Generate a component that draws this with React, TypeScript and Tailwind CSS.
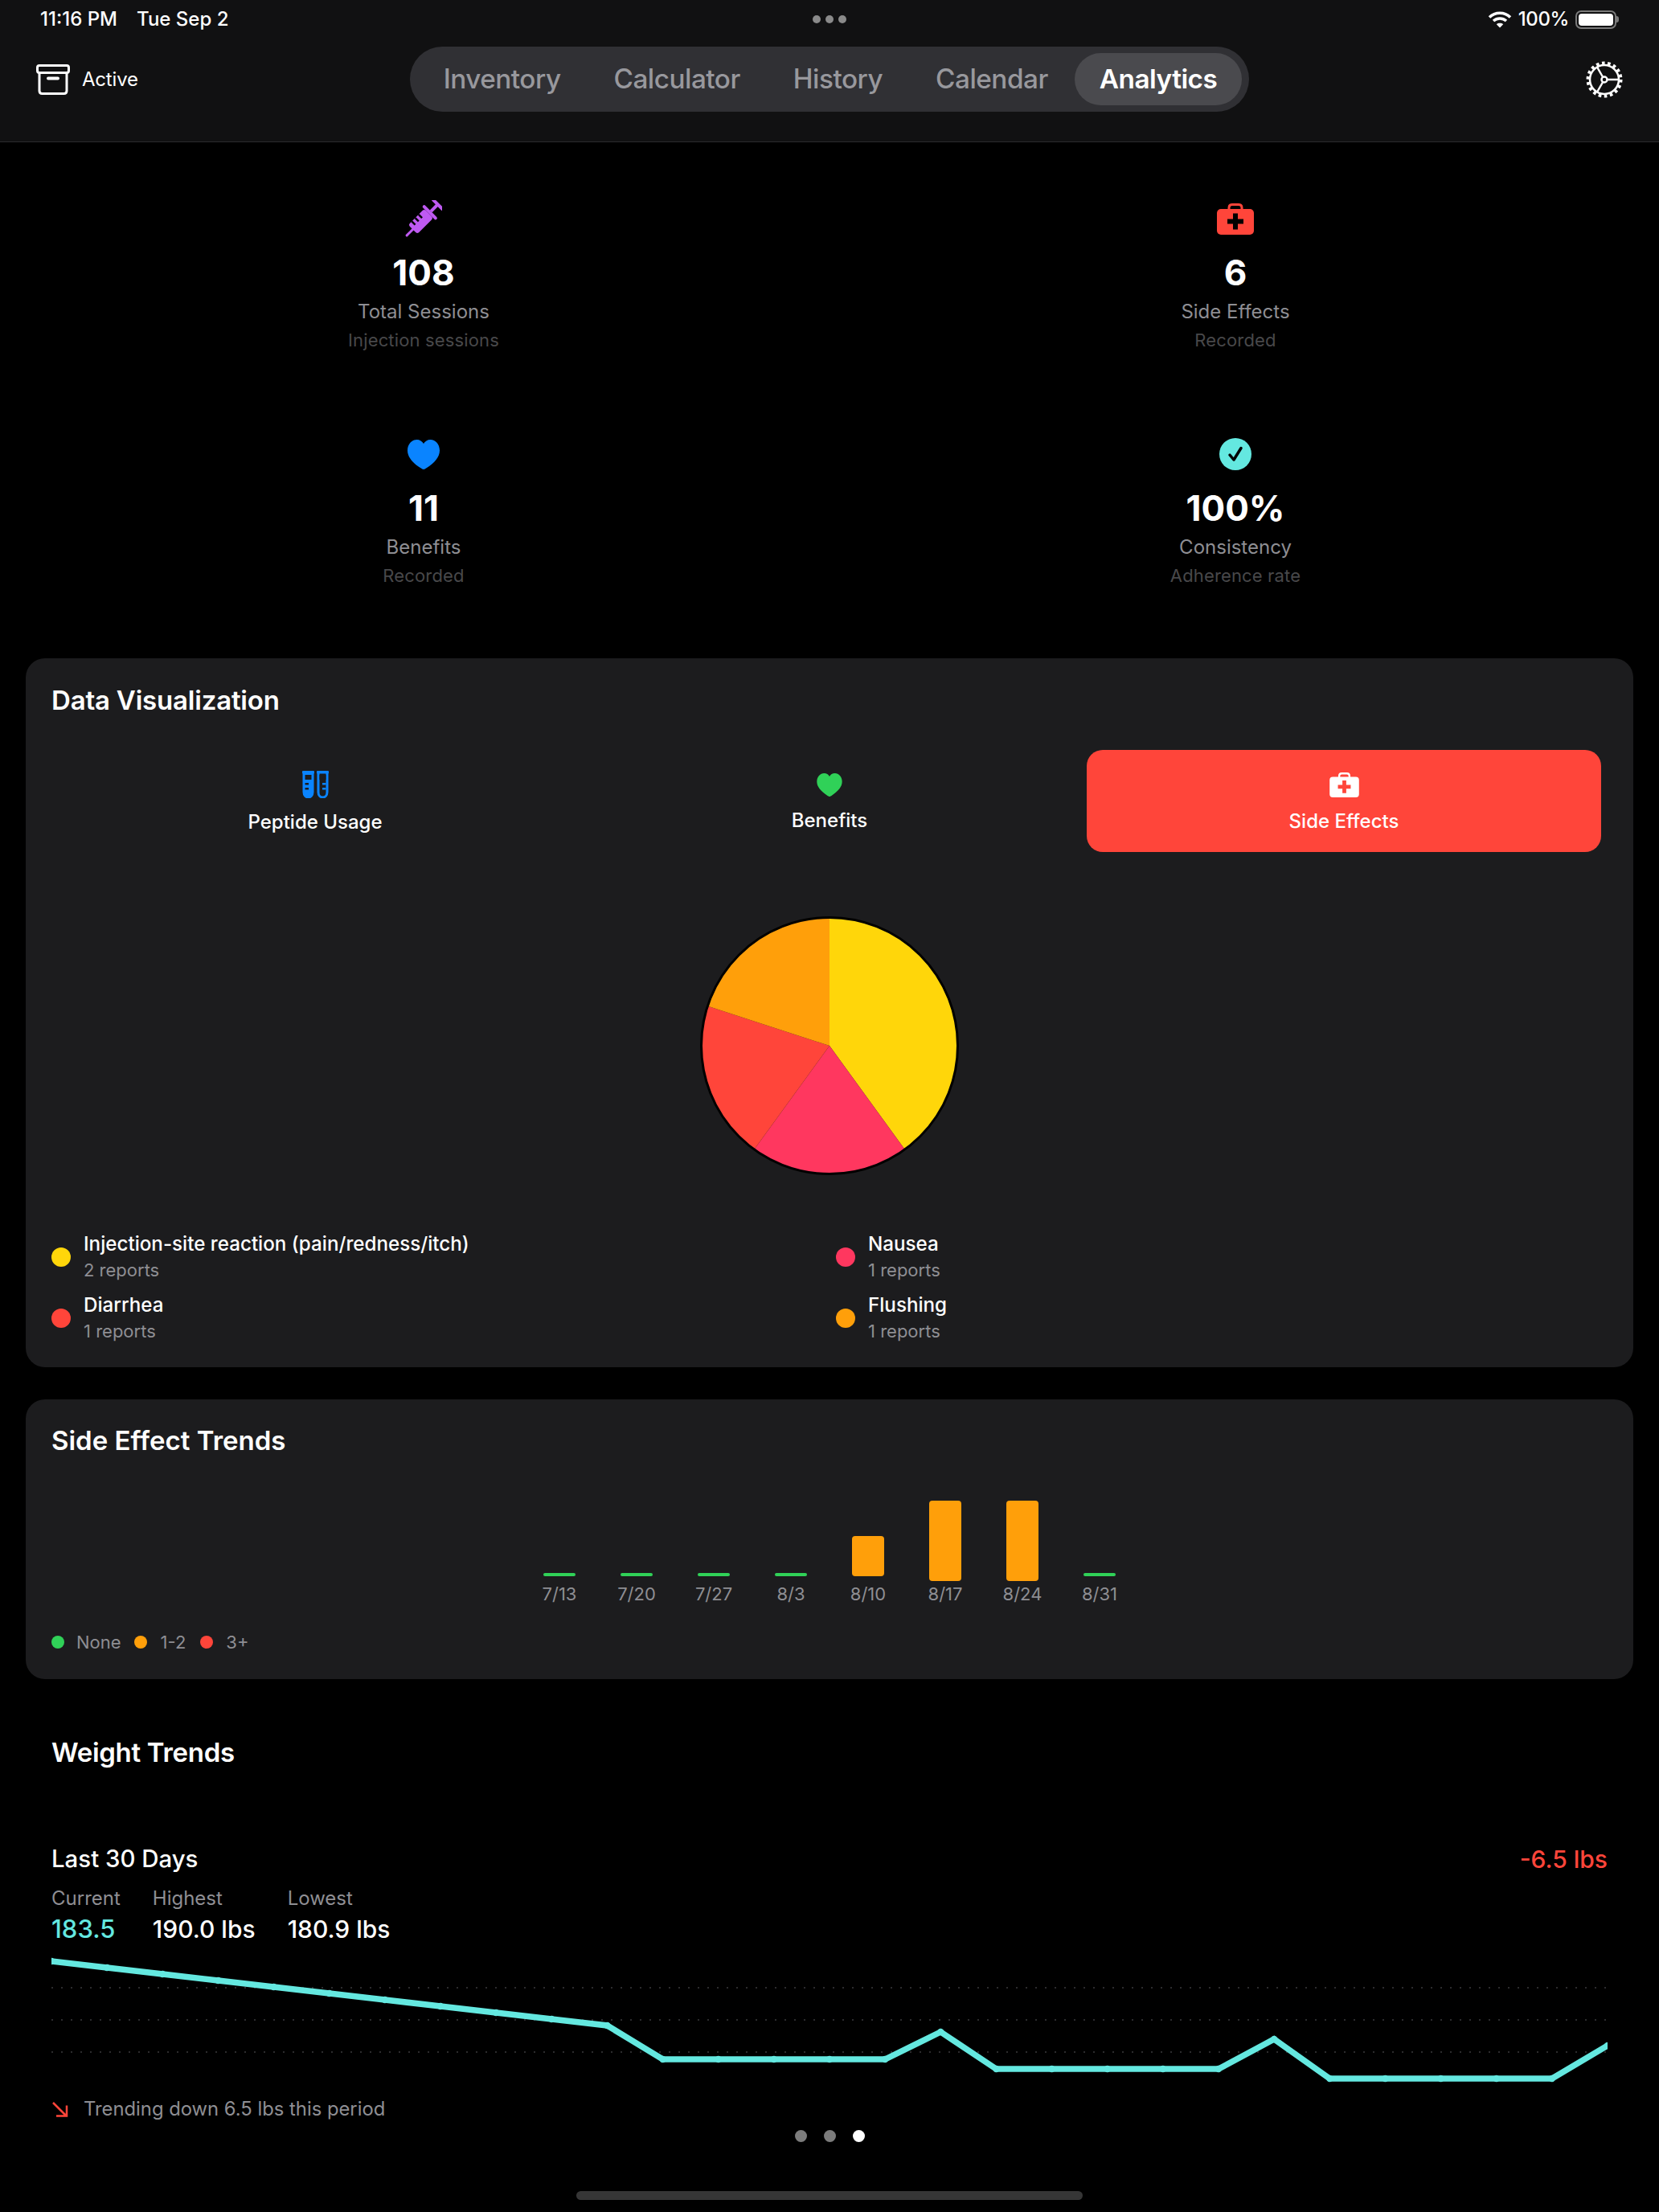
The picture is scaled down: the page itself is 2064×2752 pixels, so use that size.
const tabs = ["Inventory", "Calculator", "History", "Calendar", "Analytics"];

const stats = [
  { icon: "syringe", value: "108", label: "Total Sessions", sub: "Injection sessions" },
  { icon: "kit", value: "6", label: "Side Effects", sub: "Recorded" },
  { icon: "heart", value: "11", label: "Benefits", sub: "Recorded" },
  { icon: "check", value: "100%", label: "Consistency", sub: "Adherence rate" },
];

const legend = [
  { name: "Injection-site reaction (pain/redness/itch)", sub: "2 reports", color: "bg-[#ffd60a]" },
  { name: "Nausea", sub: "1 reports", color: "bg-[#ff375f]" },
  { name: "Diarrhea", sub: "1 reports", color: "bg-[#ff453a]" },
  { name: "Flushing", sub: "1 reports", color: "bg-[#ff9f0a]" },
];

const bars = [
  { label: "7/13", kind: "none" },
  { label: "7/20", kind: "none" },
  { label: "7/27", kind: "none" },
  { label: "8/3", kind: "none" },
  { label: "8/10", kind: "mid" },
  { label: "8/17", kind: "high" },
  { label: "8/24", kind: "high" },
  { label: "8/31", kind: "none" },
];

const weightY = [
  10, 18, 26, 34, 42, 50, 58, 66, 74, 82, 90, 132, 132, 132, 132, 132, 98, 144, 144, 144, 144, 144, 107, 156, 156,
  156, 156, 156, 115,
];
const weightPoints = weightY.map((y, i) => `${(i * 1936) / 28},${y}`).join(" ");

function HeartIcon({ className }: { className: string }) {
  return (
    <svg viewBox="0 0 40 37" className={className} fill="currentColor">
      <path d="M20 37C19 37 17.8 36.3 16 35.1 6.5 28.8 0 21.600 0 13.500 0 5.700 5.300 0 11.500 0 15.300 0 18.200 2 20 5.100 21.800 2 24.700 0 28.500 0 34.700 0 40 5.700 40 13.500 40 21.600 33.500 28.800 24 35.100 22.200 36.300 21 37 20 37Z" />
    </svg>
  );
}

function KitIcon({ className, cross }: { className: string; cross: string }) {
  return (
    <svg viewBox="0 0 46 39" className={className}>
      <path d="M15 9V5.500C15 3 16.500 1.500 19 1.500H27C29.500 1.500 31 3 31 5.500V9" fill="none" stroke="currentColor" strokeWidth="3" />
      <rect x="0" y="7" width="46" height="32" rx="5" fill="currentColor" />
      <path d="M20 12.500H26V19.500H33V25.500H26V32.500H20V25.500H13V19.500H20Z" fill={cross} />
    </svg>
  );
}

function SyringeIcon({ className }: { className: string }) {
  return (
    <svg viewBox="0 0 46 46" className={className} fill="currentColor">
      <g transform="rotate(-45 23 23)">
        <rect x="-8" y="21.500" width="16" height="3" rx="1.500" />
        <rect x="4" y="15" width="28" height="16" rx="3" />
        <rect x="9" y="15" width="2.500" height="6" fill="#000" />
        <rect x="15" y="15" width="2.500" height="6" fill="#000" />
        <rect x="21" y="15" width="2.500" height="6" fill="#000" />
        <rect x="32" y="11" width="4" height="24" rx="2" />
        <rect x="36" y="21" width="11" height="4" />
        <rect x="46" y="13" width="4" height="20" rx="2" />
      </g>
    </svg>
  );
}

function CheckIcon({ className }: { className: string }) {
  return (
    <svg viewBox="0 0 40 40" className={className}>
      <circle cx="20" cy="20" r="20" fill="currentColor" />
      <path d="M13 21L18 27L27 12.500" fill="none" stroke="#000" strokeWidth="3.500" strokeLinecap="round" strokeLinejoin="round" />
    </svg>
  );
}

function TubesIcon({ className }: { className: string }) {
  return (
    <svg viewBox="0 0 33 34" className={className} fill="none">
      {[0, 18].map((x) => (
        <g key={x} transform={`translate(${x} 0)`}>
          <rect x="0" y="0" width="15" height="3.500" rx="1" fill="currentColor" />
          <path d="M2 3V26.500C2 30.500 4.500 33 7.500 33S13 30.500 13 26.500V3" stroke="currentColor" strokeWidth="3" fill={x === 0 ? "currentColor" : "none"} />
          <rect x="3.500" y="5" width="8" height="6" fill="#1c1c1e" />
          <rect x={x === 0 ? 3.500 : 7} y="15" width="4.500" height="2.500" fill={x === 0 ? "#1c1c1e" : "currentColor"} />
          <rect x={x === 0 ? 3.500 : 7} y="21" width="4.500" height="2.500" fill={x === 0 ? "#1c1c1e" : "currentColor"} />
        </g>
      ))}
    </svg>
  );
}

function GearIcon({ className }: { className: string }) {
  return (
    <svg viewBox="0 0 46 46" className={className} fill="none" stroke="currentColor">
      <circle cx="23" cy="23" r="18" strokeWidth="2.500" />
      <circle cx="23" cy="23" r="20.500" strokeWidth="4" strokeDasharray="3.600 3.550" />
      <circle cx="23" cy="23" r="3.500" strokeWidth="2.500" />
      <path d="M26.500 23H41M21.200 20L14 7.500M21.200 26L14 38.500" strokeWidth="2.500" />
    </svg>
  );
}

function ArchiveIcon({ className }: { className: string }) {
  return (
    <svg viewBox="0 0 42 38" className={className} fill="none" stroke="currentColor" strokeWidth="3">
      <rect x="1.500" y="1.500" width="39" height="9" rx="2.500" />
      <path d="M4 10.500V33C4 35.200 5.300 36.500 7.500 36.500H34.500C36.700 36.500 38 35.200 38 33V10.500" />
      <path d="M15 17.500H27" strokeWidth="4" strokeLinecap="round" />
    </svg>
  );
}

function StatIcon({ name }: { name: string }) {
  if (name === "syringe") return <SyringeIcon className="h-[46px] w-[46px] text-[#bf5af2]" />;
  if (name === "kit") return <KitIcon className="h-[39px] w-[46px] text-[#ff453a]" cross="#000" />;
  if (name === "heart") return <HeartIcon className="h-[37px] w-[40px] text-[#0a84ff]" />;
  return <CheckIcon className="h-[40px] w-[40px] text-[#64e8e0]" />;
}

function StatusBar() {
  return (
    <div className="grid h-[48px] grid-cols-[1fr_auto_1fr] items-center pl-[50px] pr-[50px] text-[24px] leading-none text-white">
      <div className="flex gap-[24px] font-medium">
        <span>11:16 PM</span>
        <span>Tue Sep 2</span>
      </div>
      <div className="flex gap-[6px]">
        <span className="h-[10px] w-[10px] rounded-full bg-[#8a8a8a]" />
        <span className="h-[10px] w-[10px] rounded-full bg-[#8a8a8a]" />
        <span className="h-[10px] w-[10px] rounded-full bg-[#8a8a8a]" />
      </div>
      <div className="flex items-center justify-end gap-[8px] font-medium tracking-[-0.4px]">
        <svg viewBox="0 0 30 22" className="h-[22px] w-[30px]" fill="none" stroke="currentColor" strokeWidth="3.500">
          <path d="M2 8.500C9 1.500 21 1.500 28 8.500" />
          <path d="M7 13C11.500 9 18.500 9 23 13" />
          <path d="M15 21.500L10.800 17.200C13 15.400 17 15.400 19.200 17.200Z" fill="currentColor" stroke="none" />
        </svg>
        <span>100%</span>
        <div className="flex items-center">
          <div className="h-[23px] w-[51px] rounded-[7px] border-2 border-[#7a7a7a] p-[2px]">
            <div className="h-full w-full rounded-[4px] bg-white" />
          </div>
          <div className="h-[8px] w-[3px] rounded-r-full bg-[#7a7a7a]" />
        </div>
      </div>
    </div>
  );
}

function Header() {
  return (
    <div className="h-[177px] shrink-0 border-b border-[#2b2b2d] bg-[#111112]">
      <StatusBar />
      <div className="mt-[10px] grid h-[81px] grid-cols-[1fr_auto_1fr] items-center px-[45px]">
        <div className="flex items-center gap-[15px] text-white">
          <ArchiveIcon className="h-[38px] w-[42px]" />
          <span className="text-[24px] leading-none tracking-[-0.2px]">Active</span>
        </div>
        <div className="flex h-[81px] items-center rounded-full bg-[#303034] px-[9px]">
          {tabs.map((t) => (
            <div
              key={t}
              className={
                t === "Analytics"
                  ? "flex h-[65px] items-center rounded-full bg-[#4a4a4e] px-[31px] text-[33.300px] font-semibold tracking-[-0.5px] text-white"
                  : "flex h-[65px] items-center px-[33px] text-[33.300px] font-medium tracking-[-0.5px] text-[#98989d]"
              }
            >
              {t}
            </div>
          ))}
        </div>
        <div className="flex justify-end text-white">
          <GearIcon className="h-[46px] w-[46px]" />
        </div>
      </div>
    </div>
  );
}

function Stats() {
  return (
    <div className="grid grid-cols-2 gap-x-[20px] gap-y-[105px] px-[32px] pt-[72px]">
      {stats.map((s) => (
        <div key={s.label} className="flex flex-col items-center">
          <div className="flex h-[46px] items-center justify-center">
            <StatIcon name={s.icon} />
          </div>
          <div className="mt-[20px] text-[44px] font-bold leading-[48px] text-white">{s.value}</div>
          <div className="mt-[10px] text-[24px] leading-[30px] text-[#8e8e93]">{s.label}</div>
          <div className="mt-[6px] text-[22px] leading-[28px] tracking-[0.15px] text-[#48484a]">{s.sub}</div>
        </div>
      ))}
    </div>
  );
}

function DataCard() {
  return (
    <div className="mx-[32px] mt-[89px] h-[882px] rounded-[24px] bg-[#1c1c1e] px-[32px] pt-[32px]">
      <div className="text-[33px] font-semibold leading-[40px] tracking-[-0.2px] text-white">Data Visualization</div>
      <div className="mt-[42px] grid grid-cols-3 px-[8px]">
        <div className="flex h-[127px] flex-col items-center pt-[26px]">
          <TubesIcon className="h-[34px] w-[33px] text-[#0a84ff]" />
          <span className="mt-[14px] text-[24px] font-medium leading-[32px] text-white">Peptide Usage</span>
        </div>
        <div className="flex h-[127px] flex-col items-center pt-[29px]">
          <HeartIcon className="h-[29px] w-[32px] text-[#30d158]" />
          <span className="mt-[14px] text-[24px] font-medium leading-[32px] text-white">Benefits</span>
        </div>
        <div className="flex h-[127px] flex-col items-center rounded-[20px] bg-[#ff453a] pt-[28px]">
          <KitIcon className="h-[31px] w-[37px] text-white" cross="#ff453a" />
          <span className="mt-[14px] text-[24px] font-medium leading-[32px] text-white">Side Effects</span>
        </div>
      </div>
      <div className="mt-[81px] flex justify-center">
        <svg viewBox="0 0 320 320" className="h-[320px] w-[320px] overflow-visible">
          <path d="M160 160V1A159 159 0 0 1 253.460 288.630Z" fill="#ffd60a" />
          <path d="M160 160L253.460 288.630A159 159 0 0 1 66.540 288.630Z" fill="#ff375f" />
          <path d="M160 160L66.540 288.630A159 159 0 0 1 8.780 110.870Z" fill="#ff453a" />
          <path d="M160 160L8.780 110.870A159 159 0 0 1 160 1Z" fill="#ff9f0a" />
          <circle cx="160" cy="160" r="159.500" fill="none" stroke="#000" strokeWidth="3" />
        </svg>
      </div>
      <div className="mt-[71px] grid grid-cols-[976px_1fr] gap-y-[13px]">
        {legend.map((l) => (
          <div key={l.name} className="flex items-center gap-[16px]">
            <span className={`h-[24px] w-[24px] rounded-full ${l.color}`} />
            <div>
              <div className="text-[24.200px] font-medium leading-[32px] text-white">{l.name}</div>
              <div className="mt-px text-[22px] leading-[30px] text-[#8e8e93]">{l.sub}</div>
            </div>
          </div>
        ))}
      </div>
    </div>
  );
}

function TrendsCard() {
  return (
    <div className="mx-[32px] mt-[40px] h-[348px] rounded-[24px] bg-[#1c1c1e] px-[32px] pt-[31px]">
      <div className="text-[33px] font-semibold leading-[40px] text-white">Side Effect Trends</div>
      <div className="mt-[55px] flex justify-center">
        {bars.map((b) => (
          <div key={b.label} className="flex w-[96px] flex-col items-center">
            <div className="flex h-[100px] items-end">
              {b.kind === "none" && <div className="mb-[6px] h-[4px] w-[40px] rounded-[2px] bg-[#30d158]" />}
              {b.kind === "mid" && <div className="mb-[6px] h-[50px] w-[40px] rounded-[4px] bg-[#ff9f0a]" />}
              {b.kind === "high" && <div className="h-[100px] w-[40px] rounded-[4px] bg-[#ff9f0a]" />}
            </div>
            <div className="mt-[2px] text-[22px] leading-[28px] text-[#8e8e93]">{b.label}</div>
          </div>
        ))}
      </div>
      <div className="mt-[32px] flex items-center text-[22px] leading-[28px] text-[#8e8e93]">
        <span className="h-[16px] w-[16px] rounded-full bg-[#30d158]" />
        <span className="ml-[15px]">None</span>
        <span className="ml-[16px] h-[16px] w-[16px] rounded-full bg-[#ff9f0a]" />
        <span className="ml-[17px]">1-2</span>
        <span className="ml-[18px] h-[16px] w-[16px] rounded-full bg-[#ff453a]" />
        <span className="ml-[16px]">3+</span>
      </div>
    </div>
  );
}

function WeightSection() {
  return (
    <div className="px-[64px]">
      <div className="mt-[69px] text-[33px] font-semibold leading-[44px] tracking-[-0.3px] text-white">Weight Trends</div>
      <div className="mt-[91px] flex items-center justify-between font-medium leading-[40px]">
        <span className="text-[29.400px] text-white">Last 30 Days</span>
        <span className="text-[30px] text-[#ff453a]">-6.5 lbs</span>
      </div>
      <div className="mt-[14px] flex gap-[40px]">
        <div>
          <div className="text-[24px] leading-[30px] text-[#8e8e93]">Current</div>
          <div className="mt-[4px] text-[31px] font-medium leading-[38px] text-[#64e8e0]">183.5</div>
        </div>
        <div>
          <div className="text-[24px] leading-[30px] text-[#8e8e93]">Highest</div>
          <div className="mt-[4px] text-[30px] font-medium leading-[38px] text-white">190.0 lbs</div>
        </div>
        <div>
          <div className="text-[24px] leading-[30px] text-[#8e8e93]">Lowest</div>
          <div className="mt-[4px] text-[30px] font-medium leading-[38px] text-white">180.9 lbs</div>
        </div>
      </div>
      <svg viewBox="0 0 1936 170" className="mt-[11px] h-[170px] w-[1936px]">
        {[43, 83, 123].map((y) => (
          <line key={y} x1="0" x2="1936" y1={y} y2={y} stroke="#2c2c2e" strokeWidth="2" strokeDasharray="2 10" />
        ))}
        <polyline points={weightPoints} fill="none" stroke="#64e8e0" strokeWidth="7.500" strokeLinejoin="miter" />
        {weightY.map((y, i) => (
          <circle key={i} cx={(i * 1936) / 28} cy={y} r="4.200" fill="#64e8e0" />
        ))}
      </svg>
      <div className="mt-[9px] flex items-center gap-[19px] text-[23.800px] leading-[30px] text-[#8e8e93]">
        <svg viewBox="0 0 21 19" className="h-[19px] w-[21px]" fill="none" stroke="#ff453a" strokeWidth="2.500">
          <path d="M2 1L18 17M19 4.500V17.500H6" />
        </svg>
        <span>Trending down 6.5 lbs this period</span>
      </div>
      <div className="mt-[11px] flex justify-center gap-[21px]">
        <span className="h-[15px] w-[15px] rounded-full bg-[#7c7c7c]" />
        <span className="h-[15px] w-[15px] rounded-full bg-[#7c7c7c]" />
        <span className="h-[15px] w-[15px] rounded-full bg-white" />
      </div>
      <div className="mx-auto mt-[61px] h-[11px] w-[630px] rounded-full bg-[#363636]" />
    </div>
  );
}

export default function App() {
  return (
    <div className="flex h-[2752px] w-[2064px] flex-col overflow-hidden bg-black font-['Inter',sans-serif]">
      <Header />
      <Stats />
      <DataCard />
      <TrendsCard />
      <WeightSection />
    </div>
  );
}
